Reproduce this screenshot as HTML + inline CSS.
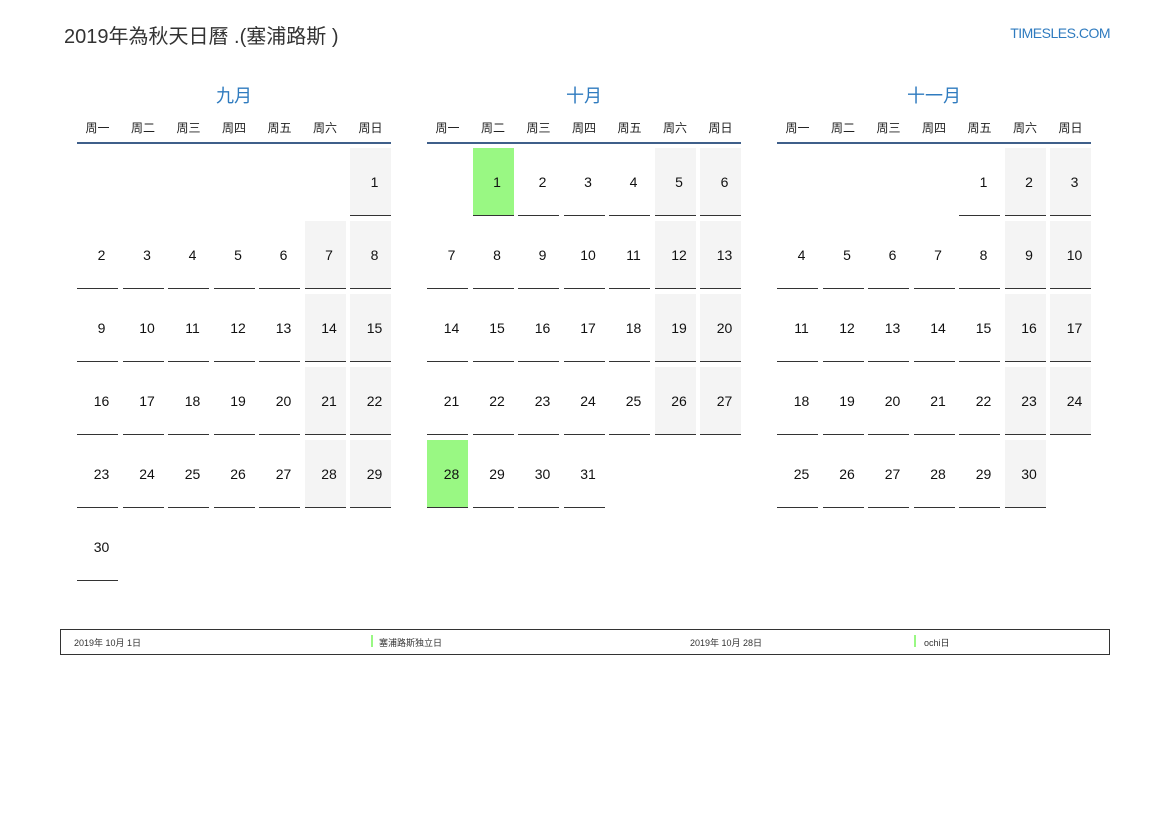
<!DOCTYPE html>
<html><head><meta charset="utf-8"><style>
body{margin:0;width:1169px;height:827px;background:#fff;font-family:"Liberation Sans","Noto Sans CJK SC",sans-serif;position:relative;overflow:hidden}
.t{position:absolute;left:64px;top:20px;font-size:20px;color:#333}
.site{position:absolute;right:59px;top:25px;font-size:14px;color:#2f7bbf;letter-spacing:-0.5px}
.m{position:absolute;top:86px;width:314px}
.mt{text-align:center;color:#2f7bbf;font-size:18px;height:24px;line-height:24px;margin-top:-2px}
.wd{display:grid;grid-template-columns:repeat(7,41px);column-gap:4.5px;font-size:12px;color:#222;text-align:center;margin-top:10px;height:20px;line-height:20px;border-bottom:2px solid #3f5f8a;padding-bottom:4px}
.g{display:grid;grid-template-columns:repeat(7,41px);column-gap:4.5px;row-gap:5px;grid-auto-rows:68px;margin-top:4px}
.g div{box-sizing:border-box;border-bottom:1px solid #333;display:flex;align-items:center;justify-content:center;font-size:14px;color:#111;padding-left:8px}
.g div.e{border:none}
.g div.w{background:#f4f4f4}
.g div.h{background:#99f883}
.f{position:absolute;left:60px;top:629px;width:1048px;height:24px;border:1px solid #333;font-size:9px;color:#333}
.f span{position:absolute;top:6px}
.bar{position:absolute;top:5px;width:2px;height:12px;background:#99f883}
</style></head><body>
<div class="t">2019年為秋天日曆 .(塞浦路斯 )</div>
<div class="site">TIMESLES.COM</div>

<div class="m" style="left:77px"><div class="mt">九月</div>
<div class="wd"><span>周一</span><span>周二</span><span>周三</span><span>周四</span><span>周五</span><span>周六</span><span>周日</span></div>
<div class="g">
<div class="e"></div><div class="e"></div><div class="e"></div><div class="e"></div><div class="e"></div><div class="e"></div><div class="w">1</div>
<div>2</div><div>3</div><div>4</div><div>5</div><div>6</div><div class="w">7</div><div class="w">8</div>
<div>9</div><div>10</div><div>11</div><div>12</div><div>13</div><div class="w">14</div><div class="w">15</div>
<div>16</div><div>17</div><div>18</div><div>19</div><div>20</div><div class="w">21</div><div class="w">22</div>
<div>23</div><div>24</div><div>25</div><div>26</div><div>27</div><div class="w">28</div><div class="w">29</div>
<div>30</div>
</div></div>

<div class="m" style="left:427px"><div class="mt">十月</div>
<div class="wd"><span>周一</span><span>周二</span><span>周三</span><span>周四</span><span>周五</span><span>周六</span><span>周日</span></div>
<div class="g">
<div class="e"></div><div class="h">1</div><div>2</div><div>3</div><div>4</div><div class="w">5</div><div class="w">6</div>
<div>7</div><div>8</div><div>9</div><div>10</div><div>11</div><div class="w">12</div><div class="w">13</div>
<div>14</div><div>15</div><div>16</div><div>17</div><div>18</div><div class="w">19</div><div class="w">20</div>
<div>21</div><div>22</div><div>23</div><div>24</div><div>25</div><div class="w">26</div><div class="w">27</div>
<div class="h">28</div><div>29</div><div>30</div><div>31</div>
</div></div>

<div class="m" style="left:777px"><div class="mt">十一月</div>
<div class="wd"><span>周一</span><span>周二</span><span>周三</span><span>周四</span><span>周五</span><span>周六</span><span>周日</span></div>
<div class="g">
<div class="e"></div><div class="e"></div><div class="e"></div><div class="e"></div><div>1</div><div class="w">2</div><div class="w">3</div>
<div>4</div><div>5</div><div>6</div><div>7</div><div>8</div><div class="w">9</div><div class="w">10</div>
<div>11</div><div>12</div><div>13</div><div>14</div><div>15</div><div class="w">16</div><div class="w">17</div>
<div>18</div><div>19</div><div>20</div><div>21</div><div>22</div><div class="w">23</div><div class="w">24</div>
<div>25</div><div>26</div><div>27</div><div>28</div><div>29</div><div class="w">30</div>
</div></div>

<div class="f">
<span style="left:13px">2019年 10月 1日</span>
<div class="bar" style="left:310px"></div><span style="left:318px">塞浦路斯独立日</span>
<span style="left:629px">2019年 10月 28日</span>
<div class="bar" style="left:853px"></div><span style="left:863px">ochi日</span>
</div>
</body></html>
